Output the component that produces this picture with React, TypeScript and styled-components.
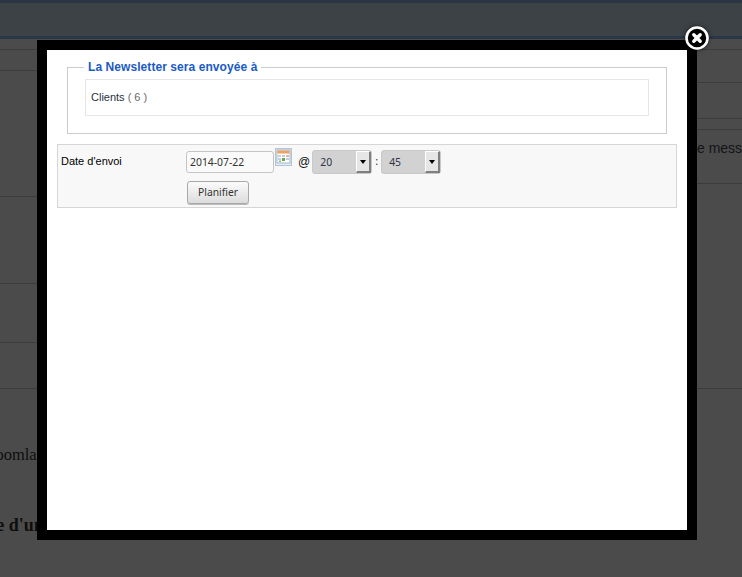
import React from "react";
import styled, { createGlobalStyle } from "styled-components";

const Global = createGlobalStyle`
  html, body { margin: 0; padding: 0; width: 742px; height: 577px; overflow: hidden; background: #4b4b4b; }
  * { box-sizing: border-box; }
`;
const Page = styled.div`
  position: relative; width: 742px; height: 577px; overflow: hidden; background: #4b4b4b;
  display: flex; flex-direction: column;
`;
const Header = styled.header`
  height: 39px; flex: none; background: #3c4246;
  border-top: 3px solid #2b3545; border-bottom: 3px solid #2b3648;
`;
const Columns = styled.div`display: flex; justify-content: space-between; flex: 1;`;
const Column = styled.div`width: 60px; overflow: hidden; display: flex; flex-direction: column;`;
const Row = styled.div<{ $h: number }>`
  height: ${p => p.$h}px; flex: none; border-bottom: 1px solid #3c3c3c;
`;
const MessageRow = styled(Row)`
  font: 14px/1 "Liberation Sans", sans-serif; color: #141414; white-space: nowrap;
  padding: 11px 0 0 15px;
`;
const BodyText = styled.p<{ $bold?: boolean; $mt: number; $shift: number; $size: number }>`
  margin: ${p => p.$mt}px 0 0 ${p => p.$shift}px; white-space: nowrap; color: #0e0e0e;
  font: ${p => (p.$bold ? "bold" : "normal")} ${p => p.$size}px/20px "Liberation Serif", serif;
`;
const Modal = styled.div`
  position: absolute; left: 37px; top: 40px; width: 660px; height: 500px;
  border: 10px solid #000; background: #fff; padding: 10px 10px 0;
`;
const Close = styled.div`
  position: absolute; left: 685px; top: 26px; width: 24px; height: 24px;
  filter: drop-shadow(0 0 2px rgba(0,0,0,.6));
`;
const Group = styled.fieldset`
  margin: 0 10px; padding: 0 17px 17px; height: 74px; border: 1px solid #cbcbcb; min-width: 0;
`;
const Legend = styled.legend`
  margin-left: -1px; padding: 1px 4px 0; color: #1a5bc4; letter-spacing: 0.07px;
  font: bold 12px/13px "Liberation Sans", sans-serif;
`;
const ListBox = styled.div`
  margin-top: 5px; height: 37px; border: 1px solid #e6e6e6; padding: 0 5px;
  font: 11px/35px "Liberation Sans", sans-serif; color: #2a3342;
`;
const Count = styled.span`color: #6a6a6a; margin-left: 3px;`;
const Panel = styled.div`
  margin-top: 10px; height: 64px; background: #f8f8f8; border: 1px solid #d6d6d6;
  display: grid; grid-template-columns: 125px 1fr; padding: 5px 0 0 3px;
`;
const Label = styled.div`
  font: 11px/13px "Liberation Sans", sans-serif; color: #000; padding-top: 5px;
`;
const Fields = styled.div`display: flex; flex-direction: column; align-items: flex-start;`;
const Line = styled.div`display: flex; align-items: flex-start; height: 31px;`;
const DateInput = styled.div`
  width: 88px; height: 22px; margin-top: 1px; border: 1px solid #c4c4c4; border-radius: 3px; background: #fafafa;
  font: 10.4px/20px "Noto Sans", sans-serif; color: #333; padding-left: 3px;
`;
const CalendarIcon = styled.svg`display: block; width: 17px; height: 18px; margin: -2px 0 0 1px;`;
const At = styled.span`
  font: 12px/1 "Liberation Sans", sans-serif; color: #111; margin: 6px 2px 0 6px;
`;
const Colon = styled.span`
  font: 11px/1 "Noto Sans", sans-serif; color: #333; margin: 5px 3px 0 3px;
`;
const Select = styled.div`
  width: 60px; height: 24px; background: #d2d2d2; border: 1px solid #c8c8c8; border-radius: 3px;
  display: flex; justify-content: space-between; padding: 0 0 0 7px;
  font: 10.4px/22px "Noto Sans", sans-serif; color: #2d3545;
`;
const Arrow = styled.div`
  width: 15px; height: 22px; background: #e6e6e6; display: flex; align-items: center; justify-content: center;
  border-right: 2px solid #7f7f7f; border-bottom: 2px solid #7f7f7f; border-left: 1px solid #fff; border-top: 1px solid #fff;
  &::after {
    content: ""; width: 0; height: 0; border-left: 3.5px solid transparent; border-right: 3.5px solid transparent;
    border-top: 4px solid #000;
  }
`;
const Button = styled.button`
  width: 62px; height: 23px; margin: 0 0 0 1px; padding: 0; border: 1px solid #a8a8a8; border-radius: 3px;
  background: linear-gradient(#fbfbfb, #dcdcdc); box-shadow: 0 1px 0 #bbb;
  font: 10.3px/1 "Noto Sans", sans-serif; color: #333;
`;

export default function App() {
  return (
    <Page>
      <Global />
      <Header />
      <Columns>
        <Column>
          <Row $h={11} />
          <Row $h={21} />
          <Row $h={126} />
          <Row $h={87} />
          <Row $h={59} />
          <Row $h={46} />
          <BodyText $mt={56} $shift={-11} $size={16.5}>Joomla</BodyText>
          <BodyText $bold $mt={50} $shift={-34} $size={18}>Titre d'un</BodyText>
        </Column>
        <Column>
          <Row $h={11} />
          <Row $h={33} />
          <Row $h={36} />
          <Row $h={11} />
          <MessageRow $h={54}>e message</MessageRow>
          <Row $h={205} />
        </Column>
      </Columns>
      <Modal>
        <Group>
          <Legend>La Newsletter sera envoyée à</Legend>
          <ListBox>Clients<Count>( 6 )</Count></ListBox>
        </Group>
        <Panel>
          <Label>Date d'envoi</Label>
          <Fields>
            <Line>
              <DateInput>2014-07-22</DateInput>
              <CalendarIcon viewBox="0 0 17 18">
                <rect x="0.5" y="0.5" width="16" height="17" fill="#e6eef6" stroke="#b4c4d4" />
                <rect x="2" y="2" width="13" height="13" fill="#ffffff" stroke="#7f9bb8" strokeWidth="0.7" />
                <rect x="2.5" y="2.5" width="12" height="3" fill="#f0a060" />
                <path d="M3 7h3v2H3zM7 7h3v2H7zM11 7h3v2h-3zM3 10h3v2H3zM11 10h3v2h-3z" fill="#c0d0e2" />
                <path d="M7 10h3v3H7z" fill="#6aa84f" />
                <path d="M11 7h3v2h-3z" fill="#e8b0a0" />
                <path d="M4 12.5h2v1.5H4z" fill="#8cc070" />
              </CalendarIcon>
              <At>@</At>
              <Select>20<Arrow /></Select>
              <Colon>:</Colon>
              <Select>45<Arrow /></Select>
            </Line>
            <Button>Planifier</Button>
          </Fields>
        </Panel>
      </Modal>
      <Close>
        <svg width="24" height="24" viewBox="0 0 24 24">
          <circle cx="12" cy="12" r="10.5" fill="#000" stroke="#fff" strokeWidth="2.6" />
          <path d="M8.8 8.8l6.4 6.4M15.2 8.8l-6.4 6.4" stroke="#fff" strokeWidth="3.4" strokeLinecap="round" />
        </svg>
      </Close>
    </Page>
  );
}
